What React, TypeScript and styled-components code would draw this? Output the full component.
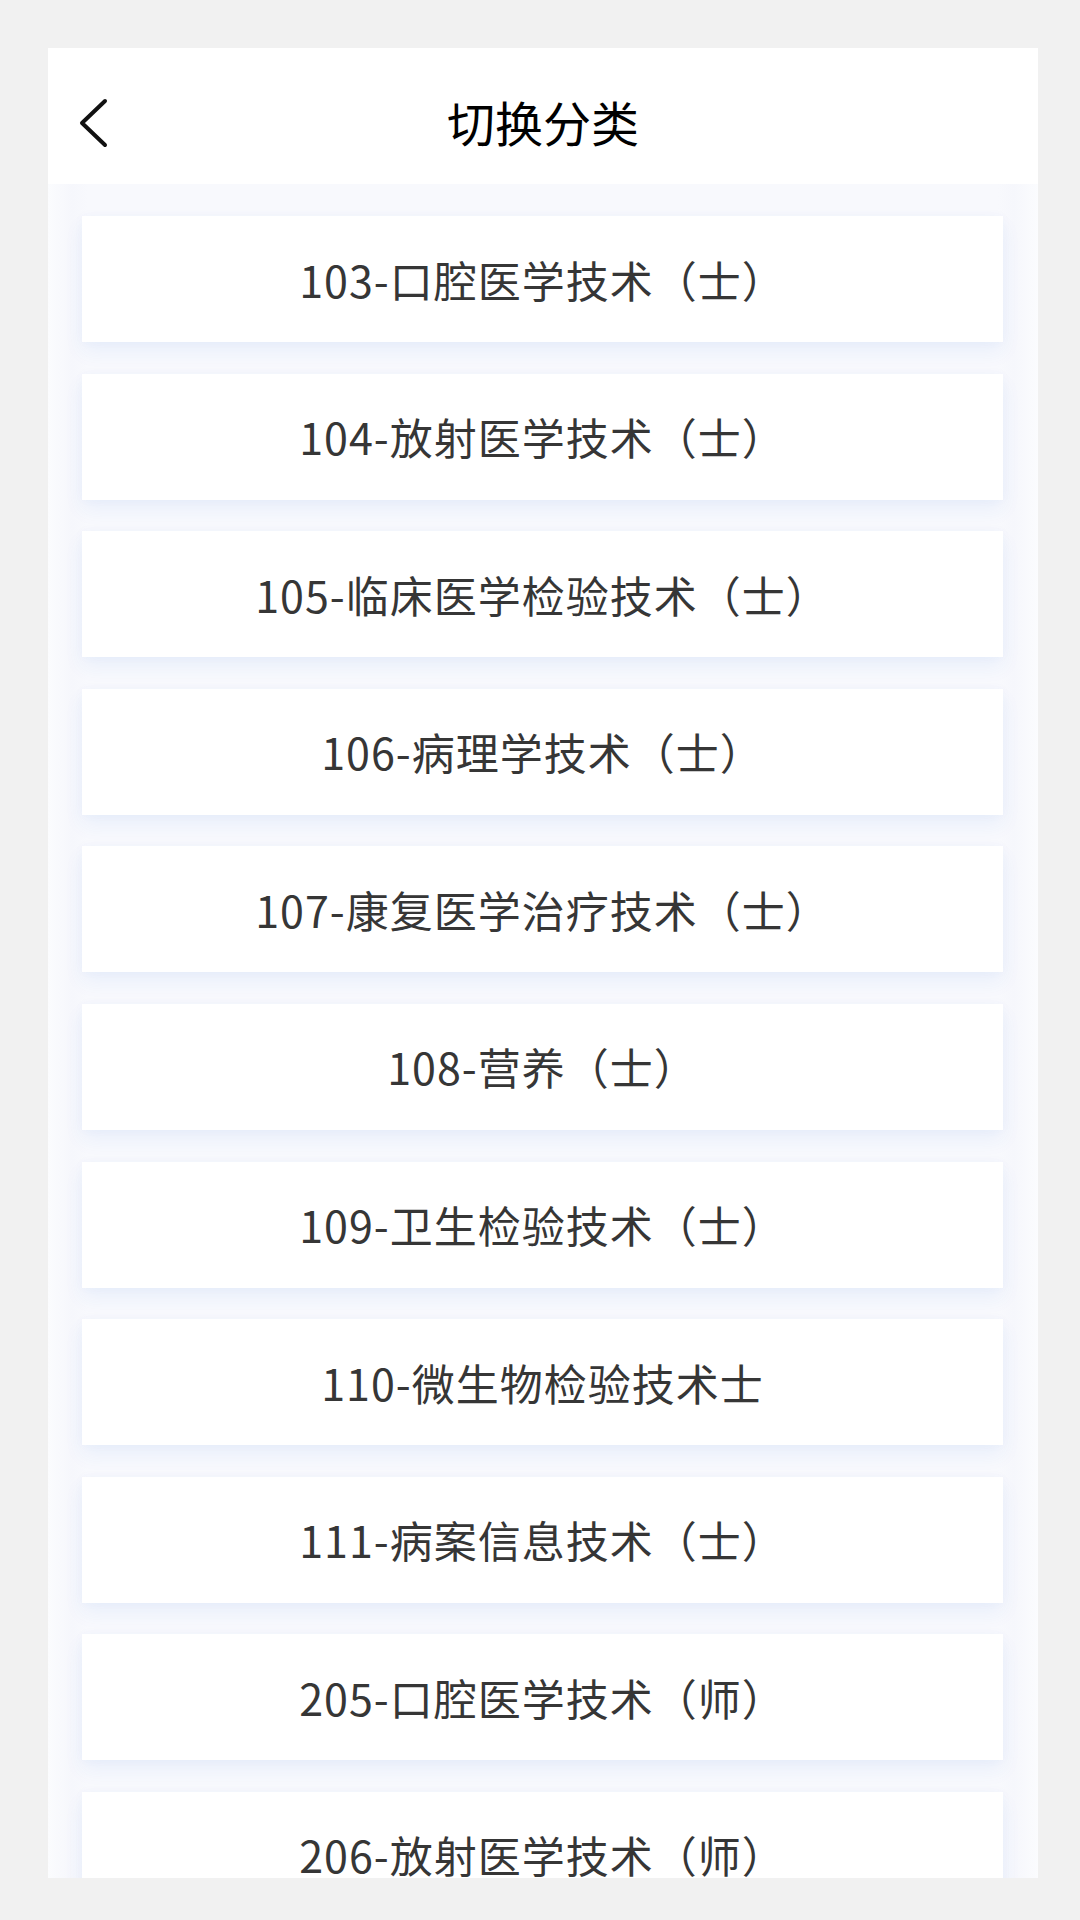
import styled, {createGlobalStyle} from 'styled-components'

const categories = [
  '103-口腔医学技术（士）',
  '104-放射医学技术（士）',
  '105-临床医学检验技术（士）',
  '106-病理学技术（士）',
  '107-康复医学治疗技术（士）',
  '108-营养（士）',
  '109-卫生检验技术（士）',
  '110-微生物检验技术士',
  '111-病案信息技术（士）',
  '205-口腔医学技术（师）',
  '206-放射医学技术（师）',
]

const App = () => {
  return (
    <Page>
      <GlobalStyle />
      <Panel>
        <Header>
          <BackBtn aria-label="back">
            <svg width="30" height="50" viewBox="0 0 30 50" fill="none">
              <path d="M27 3 L4 25 L27 47" stroke="#111" strokeWidth="4" strokeLinecap="round" strokeLinejoin="round" />
            </svg>
          </BackBtn>
          <Title>切换分类</Title>
        </Header>
        <List>
          {categories.map((name) => (
            <Item key={name}>{name}</Item>
          ))}
        </List>
      </Panel>
    </Page>
  )
}

const GlobalStyle = createGlobalStyle`
  html, body {
    margin: 0;
    padding: 0;
    background: #f1f1f1;
    font-family: "Noto Sans CJK SC", "Noto Sans", sans-serif;
  }
`
const Page = styled('div')`
  width: 1080px;
  height: 1920px;
  padding: 48px 42px 0 48px;
  box-sizing: border-box;
  background: #f1f1f1;
`
const Panel = styled('div')`
  width: 990px;
  height: 1830px;
  display: flex;
  flex-direction: column;
  overflow: hidden;
  background: #f8f9fd;
`
const Header = styled('div')`
  position: relative;
  height: 136px;
  flex-shrink: 0;
  display: flex;
  align-items: center;
  justify-content: center;
  padding-top: 10px;
  box-sizing: border-box;
  background: #fff;
`
const BackBtn = styled('div')`
  position: absolute;
  left: 30px;
  top: 50px;
  width: 30px;
  height: 50px;
`
const Title = styled('div')`
  font-size: 48px;
  font-weight: 400;
  color: #000;
  line-height: 1;
`
const List = styled('div')`
  flex: 1;
  display: flex;
  flex-direction: column;
  gap: 31.6px;
  padding: 32px 35px 0 34px;
  background: linear-gradient(90deg, #fbfcfe 0px, #f6f7fc 24px, #f8f9fd 40px, #f8f9fd calc(100% - 40px), #f6f7fc calc(100% - 24px), #fbfcfe 100%);
`
const Item = styled('div')`
  height: 126px;
  flex-shrink: 0;
  display: flex;
  align-items: center;
  justify-content: center;
  background: #fff;
  box-shadow: 0 10px 18px rgba(40, 120, 230, 0.07), 0 0 10px rgba(40, 80, 200, 0.03);
  font-size: 43px;
  letter-spacing: 1px;
  color: #363636;
  line-height: 1;
`

export default App
